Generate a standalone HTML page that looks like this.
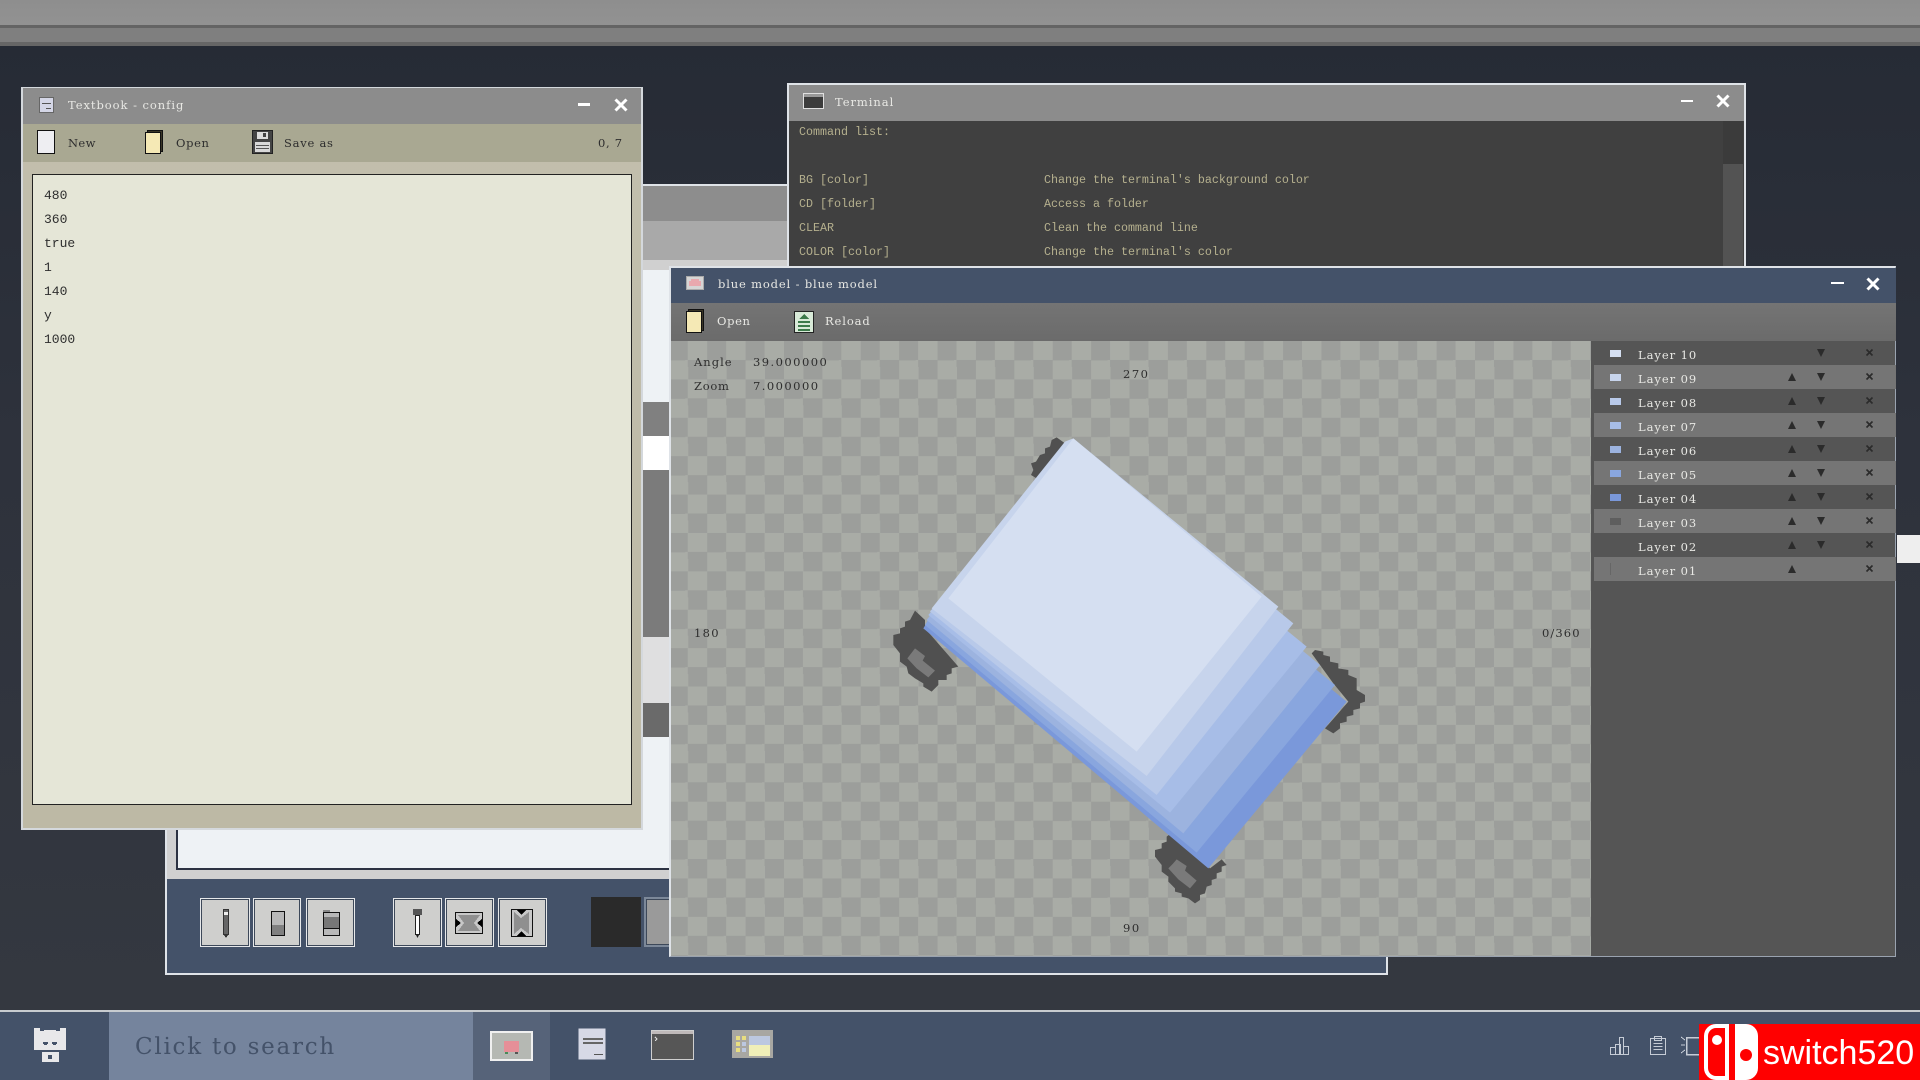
<!DOCTYPE html>
<html><head><meta charset="utf-8"><style>
html,body{margin:0;padding:0;width:1920px;height:1080px;overflow:hidden;background:#2d313b}
*{box-sizing:border-box}
.a{position:absolute}
.t{position:absolute;white-space:nowrap;line-height:16px;font-family:"DejaVu Serif","Liberation Serif",serif;font-size:11.5px;letter-spacing:.35px}
.s{letter-spacing:.95px}
.v{letter-spacing:1.3px}
.m{font-family:"Liberation Mono",monospace;letter-spacing:0}
.w{color:#e8e8e4}.d{color:#2e2e2e}
.term{color:#b5b08e;font-family:"Liberation Mono",monospace;font-size:11.67px;letter-spacing:0}
svg{position:absolute;overflow:visible}
.btn{position:absolute;top:898px;height:49px;background:#cfcfcd;border:1px solid #e6e8ea;outline:1px solid #3d4859;outline-offset:-2px}
.row{position:absolute;left:1594px;width:302px;height:24px;background:#757575}
.swatch{position:absolute;left:1610px;width:11px;height:7px}
</style></head><body>
<div class="a" style="left:0;top:0;width:1920px;height:1080px;background:linear-gradient(#262b35 40px,#2e323c 450px,#343840 1010px)"></div>
<div class="a" style="left:0;top:0;width:1920px;height:25px;background:linear-gradient(#8e8e8e,#929292)"></div>
<div class="a" style="left:0;top:25px;width:1920px;height:3px;background:#646464"></div>
<div class="a" style="left:0;top:28px;width:1920px;height:14px;background:#7f7f7f"></div>
<div class="a" style="left:0;top:42px;width:1920px;height:4px;background:#666"></div>

<!-- back window -->
<div class="a" style="left:165px;top:184px;width:1223px;height:791px;background:#445269;border:2px solid #dfe3e8"></div>
<div class="a" style="left:167px;top:186px;width:1219px;height:35px;background:#8d8d8d"></div>
<div class="a" style="left:167px;top:221px;width:1219px;height:39px;background:#a9a9a9"></div>
<div class="a" style="left:167px;top:260px;width:1219px;height:619px;background:#d0d0d0"></div>
<div class="a" style="left:176px;top:270px;width:520px;height:600px;background:#eef2f5;border-bottom:2px solid #2c3242;border-left:2px solid #2c3242"></div>
<div class="a" style="left:643px;top:402px;width:30px;height:34px;background:#808080"></div>
<div class="a" style="left:643px;top:436px;width:30px;height:34px;background:#fff"></div>
<div class="a" style="left:643px;top:470px;width:30px;height:167px;background:#7b7b7b"></div>
<div class="a" style="left:643px;top:637px;width:30px;height:66px;background:#dfdfe0"></div>
<div class="a" style="left:643px;top:703px;width:30px;height:34px;background:#6a6a6a"></div>
<div class="a" style="left:167px;top:879px;width:1219px;height:94px;background:#445269"></div>
<div class="btn" style="left:200px;width:50px"></div><div class="btn" style="left:253px;width:48px"></div><div class="btn" style="left:306px;width:49px"></div>
<div class="btn" style="left:393px;width:49px"></div><div class="btn" style="left:445px;width:49px"></div><div class="btn" style="left:498px;width:49px"></div>
<svg style="left:0;top:0" width="1" height="1" shape-rendering="crispEdges">
<rect x="223.500" y="909.500" width="5" height="25" fill="#666" stroke="#333"/><rect x="224" y="912" width="4" height="3" fill="#eee"/><path d="M224 935h4l-2 3z" fill="#333"/>
<rect x="271.500" y="911.500" width="13" height="24" fill="#b8b8b8" stroke="#111"/><rect x="272" y="925" width="12" height="10" fill="#808080"/>
<rect x="323.500" y="912.500" width="16" height="23" fill="#b8b8b8" stroke="#111"/><rect x="324" y="917" width="15" height="11" fill="#777"/><line x1="323" y1="928.500" x2="340" y2="928.500" stroke="#111"/><rect x="323" y="910" width="7" height="2" fill="#888"/>
<rect x="413" y="909" width="9" height="6" fill="#555"/><rect x="415.500" y="915.500" width="4" height="19" fill="#fff" stroke="#222"/><path d="M416 935h3l-1.500 3z" fill="#222"/>
<rect x="455.500" y="912.500" width="27" height="21" fill="#c8c8c8" stroke="#111"/><path d="M458 915h22l-6 8 6 8h-22l6-8z" fill="#8f8f8f"/><path d="M456 919l5 4-5 4zM482 919l-5 4 5 4z" fill="#000"/>
<rect x="511.500" y="909.500" width="21" height="27" fill="#c8c8c8" stroke="#111"/><path d="M514 912l7 6 8-6v22l-8-6-7 6z" fill="#8f8f8f"/><path d="M517 910h9l-4.500 5zM517 936h9l-4.500-5z" fill="#000"/>
</svg>
<div class="a" style="left:591px;top:897px;width:50px;height:50px;background:#2a2a2a"></div>
<div class="a" style="left:644px;top:897px;width:30px;height:50px;background:#9a9a9a;border:2px solid #7c8899;outline:1px solid #3d4859;outline-offset:-3px"></div>

<!-- terminal -->
<div class="a" style="left:787px;top:83px;width:959px;height:190px;background:#404040;border:2px solid #dfe3e8;border-bottom:0"></div>
<div class="a" style="left:789px;top:85px;width:955px;height:36px;background:#8c8c8c"></div>
<div class="a" style="left:1723px;top:121px;width:20px;height:43px;background:#3b3b3b"></div>
<div class="a" style="left:1723px;top:164px;width:20px;height:110px;background:#535353"></div>
<svg style="left:803px;top:93px" width="21" height="16" shape-rendering="crispEdges"><rect x=".5" y=".5" width="20" height="15" fill="#3c3c3c" stroke="#e0e0e0"/><rect x="1" y="1" width="19" height="3" fill="#999"/></svg>
<div class="t w s" style="left:835px;top:94px">Terminal</div>
<div class="a" style="left:1681px;top:100px;width:12px;height:2px;background:#fff"></div>
<svg style="left:1716px;top:94px" width="14" height="14"><path d="M1.500 1.500l11 11M12.500 1.500l-11 11" stroke="#fff" stroke-width="3"/></svg>
<div class="t term" style="left:799px;top:124px">Command list:</div>
<div class="t term" style="left:799px;top:172px">BG [color]</div><div class="t term" style="left:1044px;top:172px">Change the terminal's background color</div>
<div class="t term" style="left:799px;top:196px">CD [folder]</div><div class="t term" style="left:1044px;top:196px">Access a folder</div>
<div class="t term" style="left:799px;top:220px">CLEAR</div><div class="t term" style="left:1044px;top:220px">Clean the command line</div>
<div class="t term" style="left:799px;top:244px">COLOR [color]</div><div class="t term" style="left:1044px;top:244px">Change the terminal's color</div>

<!-- stray white -->
<div class="a" style="left:1897px;top:535px;width:23px;height:28px;background:#eeeeee"></div>

<!-- model window -->
<div class="a" style="left:669px;top:266px;width:1227px;height:691px;background:#555;border:2px solid #dfe3e8;border-right:1px solid #9aa3b0;border-bottom:1px solid #9aa3b0"></div>
<div class="a" style="left:671px;top:268px;width:1225px;height:35px;background:#445269"></div>
<div class="a" style="left:671px;top:303px;width:1225px;height:38px;background:linear-gradient(#747474,#6b6b6b)"></div>
<div class="a" style="left:671px;top:341px;width:920px;height:615px;background:repeating-conic-gradient(#a9aca6 0 25%,#9c9e9b 0 50%) -2.2px 0/38.4px 38.4px"></div>
<svg style="left:686px;top:276px" width="18" height="14" shape-rendering="crispEdges"><rect x=".5" y=".5" width="17" height="13" fill="#d5d5d5" stroke="#aaa"/><path d="M5 3h8v2h2v5H3V5h2z" fill="#e8a8ae"/></svg>
<div class="t w" style="left:718px;top:276px;letter-spacing:.85px">blue model - blue model</div>
<div class="a" style="left:1831px;top:282px;width:13px;height:2px;background:#fff"></div>
<svg style="left:1866px;top:277px" width="14" height="14"><path d="M1.500 1.500l11 11M12.500 1.500l-11 11" stroke="#fff" stroke-width="3"/></svg>
<svg style="left:686px;top:309px" width="18" height="24" shape-rendering="crispEdges"><rect x="2.500" y=".5" width="15" height="21" fill="#3a3526" stroke="#111"/><rect x=".5" y="2.500" width="15" height="21" fill="#f5e9b5" stroke="#111"/></svg>
<div class="t w" style="left:717px;top:313px;letter-spacing:.65px">Open</div>
<svg style="left:794px;top:311px" width="20" height="22" shape-rendering="crispEdges"><rect x=".5" y=".5" width="19" height="21" fill="#d8ead8" stroke="#222"/><path d="M10 3l5 5H5z" fill="#3c7a4a"/><rect x="4" y="10" width="12" height="2" fill="#3c7a4a"/><rect x="4" y="14" width="12" height="2" fill="#3c7a4a"/><rect x="4" y="18" width="12" height="2" fill="#3c7a4a"/></svg>
<div class="t w" style="left:825px;top:313px;letter-spacing:.9px">Reload</div>
<div class="t d" style="left:694px;top:354px;letter-spacing:1px">Angle</div><div class="t d v" style="left:753px;top:354px;letter-spacing:1.45px">39.000000</div>
<div class="t d" style="left:694px;top:378px;letter-spacing:.7px">Zoom</div><div class="t d v" style="left:753px;top:378px;letter-spacing:1.45px">7.000000</div>
<div class="t d v" style="left:1123px;top:366px;letter-spacing:1.5px">270</div>
<div class="t d v" style="left:694px;top:625px;letter-spacing:1.3px">180</div>
<div class="t d" style="left:1542px;top:625px;letter-spacing:1.1px">0/360</div>
<div class="t d v" style="left:1123px;top:920px;letter-spacing:1.5px">90</div>

<!-- model -->
<svg style="left:860px;top:420px" width="520" height="500" viewBox="0 0 1560 1500" shape-rendering="geometricPrecision">
<g fill="#505050">
<path d="M575 60L590 52 612 68 610 82 530 175 513 165 520 150 513 130 528 125 540 105 555 100 555 85 570 80z"/>
<path d="M165 572L195 600 195 625 295 740 275 745 275 760 260 765 260 780 235 780 235 795 215 815 190 800 190 790 165 775 145 760 140 740 120 725 120 700 100 675 100 645 120 640 120 625 135 620 135 605 150 600z"/>
<path d="M1365 690L1390 695 1390 705 1410 710 1410 725 1435 730 1435 745 1465 750 1465 765 1490 775 1490 810 1515 825 1515 845 1500 850 1500 865 1480 870 1480 885 1460 890 1460 905 1440 910 1440 925 1420 940 1395 925 1465 845 1420 790 1355 700z"/>
<path d="M935 1238L950 1250 965 1265 1050 1345 1085 1318 1100 1335 1085 1340 1085 1355 1070 1360 1070 1375 1055 1380 1055 1395 1040 1400 1035 1420 1020 1425 1020 1440 1005 1450 985 1435 965 1430 965 1420 945 1415 945 1405 925 1385 925 1370 905 1355 905 1335 885 1310 885 1290 905 1285 905 1270 920 1265 920 1250z"/>
</g>
<g fill="#7a7a7a"><path d="M165 685L195 708 188 722 225 752 205 772 170 745 142 715 152 702z"/><path d="M950 1318L980 1338 975 1352 1010 1382 990 1405 955 1378 925 1345 938 1332z"/></g>
<path d="M1360 763L1460 845 1045 1345 190 625 230 560z" fill="#7a98da"/>
<path d="M1325 713L1425 795 1010 1298 195 615 230 560z" fill="#89a6de"/>
<path d="M1280 653L1380 735 970 1240 200 600 230 560z" fill="#9cb3df"/>
<path d="M1240 598L1340 680 930 1178 205 585 235 550z" fill="#a7bde7"/>
<path d="M1200 528L1300 610 890 1125 210 575 250 525z" fill="#b8c9e9"/>
<path d="M640 55L1255 560 860 1068 215 565 615 65z" fill="#c7d4ec"/>
<path d="M640 55L1205 530 830 995 265 535z" fill="#d5dff1"/>
</svg>

<!-- layers -->
<div class="row" style="top:365px"></div><div class="row" style="top:413px"></div><div class="row" style="top:461px"></div><div class="row" style="top:509px"></div><div class="row" style="top:557px"></div>
<div class="swatch" style="top:350px;background:#d5dff1"></div>
<div class="swatch" style="top:374px;background:#c7d4ec"></div>
<div class="swatch" style="top:398px;background:#b8c9e9"></div>
<div class="swatch" style="top:422px;background:#a7bde7"></div>
<div class="swatch" style="top:446px;background:#9cb3df"></div>
<div class="swatch" style="top:470px;background:#89a6de"></div>
<div class="swatch" style="top:494px;background:#7a98da"></div>
<div class="swatch" style="top:518px;background:#5e5e5e"></div>
<div class="a" style="left:1610px;top:563px;width:1px;height:12px;background:#666"></div>
<div class="t w s" style="left:1638px;top:347px">Layer 10</div>
<div class="t w s" style="left:1638px;top:371px">Layer 09</div>
<div class="t w s" style="left:1638px;top:395px">Layer 08</div>
<div class="t w s" style="left:1638px;top:419px">Layer 07</div>
<div class="t w s" style="left:1638px;top:443px">Layer 06</div>
<div class="t w s" style="left:1638px;top:467px">Layer 05</div>
<div class="t w s" style="left:1638px;top:491px">Layer 04</div>
<div class="t w s" style="left:1638px;top:515px">Layer 03</div>
<div class="t w s" style="left:1638px;top:539px">Layer 02</div>
<div class="t w s" style="left:1638px;top:563px">Layer 01</div>
<svg style="left:0;top:0" width="1" height="1" fill="#2b2b2b">
<path d="M1817 349h8l-4 8z M1817 373h8l-4 8z M1817 397h8l-4 8z M1817 421h8l-4 8z M1817 445h8l-4 8z M1817 469h8l-4 8z M1817 493h8l-4 8z M1817 517h8l-4 8z M1817 541h8l-4 8z"/>
<path d="M1788 381h8l-4-8z M1788 405h8l-4-8z M1788 429h8l-4-8z M1788 453h8l-4-8z M1788 477h8l-4-8z M1788 501h8l-4-8z M1788 525h8l-4-8z M1788 549h8l-4-8z M1788 573h8l-4-8z"/>
<g stroke="#2b2b2b" stroke-width="1.600"><path d="M1866.500 349.500l6 6m0-6l-6 6M1866.500 373.500l6 6m0-6l-6 6M1866.500 397.500l6 6m0-6l-6 6M1866.500 421.500l6 6m0-6l-6 6M1866.500 445.500l6 6m0-6l-6 6M1866.500 469.500l6 6m0-6l-6 6M1866.500 493.500l6 6m0-6l-6 6M1866.500 517.500l6 6m0-6l-6 6M1866.500 541.500l6 6m0-6l-6 6M1866.500 565.500l6 6m0-6l-6 6"/></g>
</svg>

<!-- textbook -->
<div class="a" style="left:21px;top:87px;width:622px;height:743px;background:linear-gradient(#c2bfad,#bdb9a5);border:2px solid #d4d8dc;border-top-width:1px"></div>
<div class="a" style="left:23px;top:88px;width:618px;height:36px;background:#8c8c8c"></div>
<div class="a" style="left:23px;top:124px;width:618px;height:38px;background:#a9a892"></div>
<div class="a" style="left:32px;top:174px;width:600px;height:631px;background:#e5e6d7;border:1px solid #222"></div>
<svg style="left:39px;top:97px" width="15" height="16" shape-rendering="crispEdges"><rect x=".5" y=".5" width="14" height="15" fill="#d4d6e6" stroke="#666"/><rect x="3" y="6" width="9" height="1" fill="#555"/><rect x="7" y="11" width="5" height="1" fill="#555"/></svg>
<div class="t w s" style="left:68px;top:97px">Textbook - config</div>
<div class="a" style="left:578px;top:103px;width:12px;height:3px;background:#fff"></div>
<svg style="left:614px;top:98px" width="14" height="14"><path d="M1.500 1.500l11 11M12.500 1.500l-11 11" stroke="#fff" stroke-width="3"/></svg>
<svg style="left:37px;top:130px" width="18" height="24" shape-rendering="crispEdges"><rect x=".5" y=".5" width="17" height="23" fill="#eeeef2" stroke="#111"/></svg>
<div class="t d" style="left:68px;top:135px">New</div>
<svg style="left:145px;top:130px" width="18" height="24" shape-rendering="crispEdges"><rect x="2.500" y=".5" width="15" height="21" fill="#3a3526" stroke="#111"/><rect x=".5" y="2.500" width="15" height="21" fill="#f5e9b5" stroke="#111"/></svg>
<div class="t d" style="left:176px;top:135px;letter-spacing:.65px">Open</div>
<svg style="left:252px;top:130px" width="21" height="24" shape-rendering="crispEdges"><rect x=".5" y=".5" width="20" height="23" fill="#444" stroke="#222"/><rect x="5" y="2" width="11" height="7" fill="#ddd"/><rect x="11" y="3" width="3" height="4" fill="#444"/><rect x="3" y="12" width="15" height="10" fill="#d8d8d8"/><rect x="4" y="15" width="13" height="1" fill="#555"/><rect x="4" y="18" width="13" height="1" fill="#555"/></svg>
<div class="t d" style="left:284px;top:135px;letter-spacing:.75px">Save as</div>
<div class="t d" style="left:598px;top:135px;letter-spacing:.7px">0, 7</div>
<div class="t m d" style="left:44px;top:188px;font-size:13px">480</div>
<div class="t m d" style="left:44px;top:212px;font-size:13px">360</div>
<div class="t m d" style="left:44px;top:236px;font-size:13px">true</div>
<div class="t m d" style="left:44px;top:260px;font-size:13px">1</div>
<div class="t m d" style="left:44px;top:284px;font-size:13px">140</div>
<div class="t m d" style="left:44px;top:308px;font-size:13px">y</div>
<div class="t m d" style="left:44px;top:332px;font-size:13px">1000</div>

<!-- taskbar -->
<div class="a" style="left:0;top:1010px;width:1920px;height:2px;background:#c8ccd0"></div>
<div class="a" style="left:0;top:1012px;width:1920px;height:68px;background:#445269"></div>
<div class="a" style="left:109px;top:1012px;width:364px;height:68px;background:#75849d"></div>
<div class="a" style="left:473px;top:1012px;width:77px;height:68px;background:#566379"></div>
<div class="t" style="left:135px;top:1032px;font-size:23px;line-height:30px;letter-spacing:1.75px;color:#445269;font-family:'DejaVu Serif',serif">Click to search</div>
<svg style="left:34px;top:1028px" width="32" height="34" shape-rendering="crispEdges"><path d="M0 0h6v3h4v-1h12v1h4v-3h6v22h-32z" fill="#e8e8ea"/><path d="M9 14h5v2h-1v1h-3v-1h-1zM18 14h5v2h-1v1h-3v-1h-1z" fill="#445269"/><rect x="8" y="24" width="17" height="10" fill="#e8e8ea"/><rect x="14" y="27" width="4" height="4" fill="#445269"/></svg>
<svg style="left:490px;top:1031px" width="43" height="30" shape-rendering="crispEdges"><rect x="1" y="1" width="41" height="28" fill="#b5b8b3" stroke="#f0f0f0" stroke-width="2"/><rect x="14" y="10" width="15" height="11" fill="#e68f98"/><rect x="15" y="21" width="3" height="2" fill="#4a8a5a"/><rect x="25" y="21" width="3" height="2" fill="#555"/></svg>
<svg style="left:578px;top:1028px" width="28" height="32" shape-rendering="crispEdges"><rect x=".5" y=".5" width="27" height="31" fill="#d7d9e6"/><rect x="5" y="10" width="20" height="2" fill="#666"/><rect x="5" y="14" width="20" height="2" fill="#666"/><rect x="16" y="26" width="9" height="1" fill="#555"/></svg>
<svg style="left:651px;top:1030px" width="43" height="30" shape-rendering="crispEdges"><rect x=".5" y=".5" width="42" height="29" fill="#565656" stroke="#cfcfcf"/><rect x="1" y="1" width="41" height="3" fill="#bfb9b9"/><path d="M4 7l2 2-2 2" fill="none" stroke="#ddd"/></svg>
<svg style="left:732px;top:1030px" width="41" height="28" shape-rendering="crispEdges"><rect x="0" y="0" width="41" height="28" fill="#a8a7a2"/><rect x="17" y="6" width="21" height="20" fill="#f0efb8"/><rect x="17" y="6" width="21" height="9" fill="#bcc8e0"/><rect x="4" y="6" width="4" height="4" fill="#e8de80"/><rect x="4" y="12" width="4" height="4" fill="#e8de80"/><rect x="4" y="18" width="4" height="4" fill="#e8de80"/><rect x="10" y="6" width="4" height="4" fill="#e8de80"/><rect x="10" y="12" width="4" height="4" fill="#bcc8e0"/><rect x="10" y="18" width="4" height="4" fill="#bcc8e0"/></svg>
<svg style="left:1610px;top:1036px" width="90" height="19" fill="none" stroke="#c6ccd6" stroke-width="1" shape-rendering="crispEdges">
<path d="M.5 18.500v-7h5v7zM5.500 18.500v-10h5v10zM9.500 18.500v-17h4v17zM13.500 18.500v-8h5v8z"/>
<path d="M40.500 2.500h15v16h-15zM44.500 .5h7v4h-7zM43.500 7.500h9M43.500 10.500h9M43.500 13.500h9"/>
<path d="M76.500 1.500h14v17h-14z" stroke-width="1.500"/><path d="M71 1l4 3M71 9h4M71 17l4-3"/>
</svg>
<div class="a" style="left:1699px;top:1024px;width:221px;height:56px;background:#ff0000"></div>
<svg style="left:1703px;top:1024px" width="55" height="56"><path d="M26 0h-13A12 12 0 0 0 1 12v32a12 12 0 0 0 12 12h13z" fill="#fff"/><path d="M22 4h-9a8 8 0 0 0-8 8v32a8 8 0 0 0 8 8h9z" fill="#ff0000"/><circle cx="14" cy="16" r="5" fill="#fff"/><path d="M32 0h11a12 12 0 0 1 12 12v32a12 12 0 0 1-12 12h-11z" fill="#fff"/><circle cx="43" cy="31" r="6" fill="#ff0000"/></svg>
<div class="a" style="left:1763px;top:1032px;color:#fff;font:34px/42px 'Liberation Sans',sans-serif;white-space:nowrap">switch520</div>
</body></html>
